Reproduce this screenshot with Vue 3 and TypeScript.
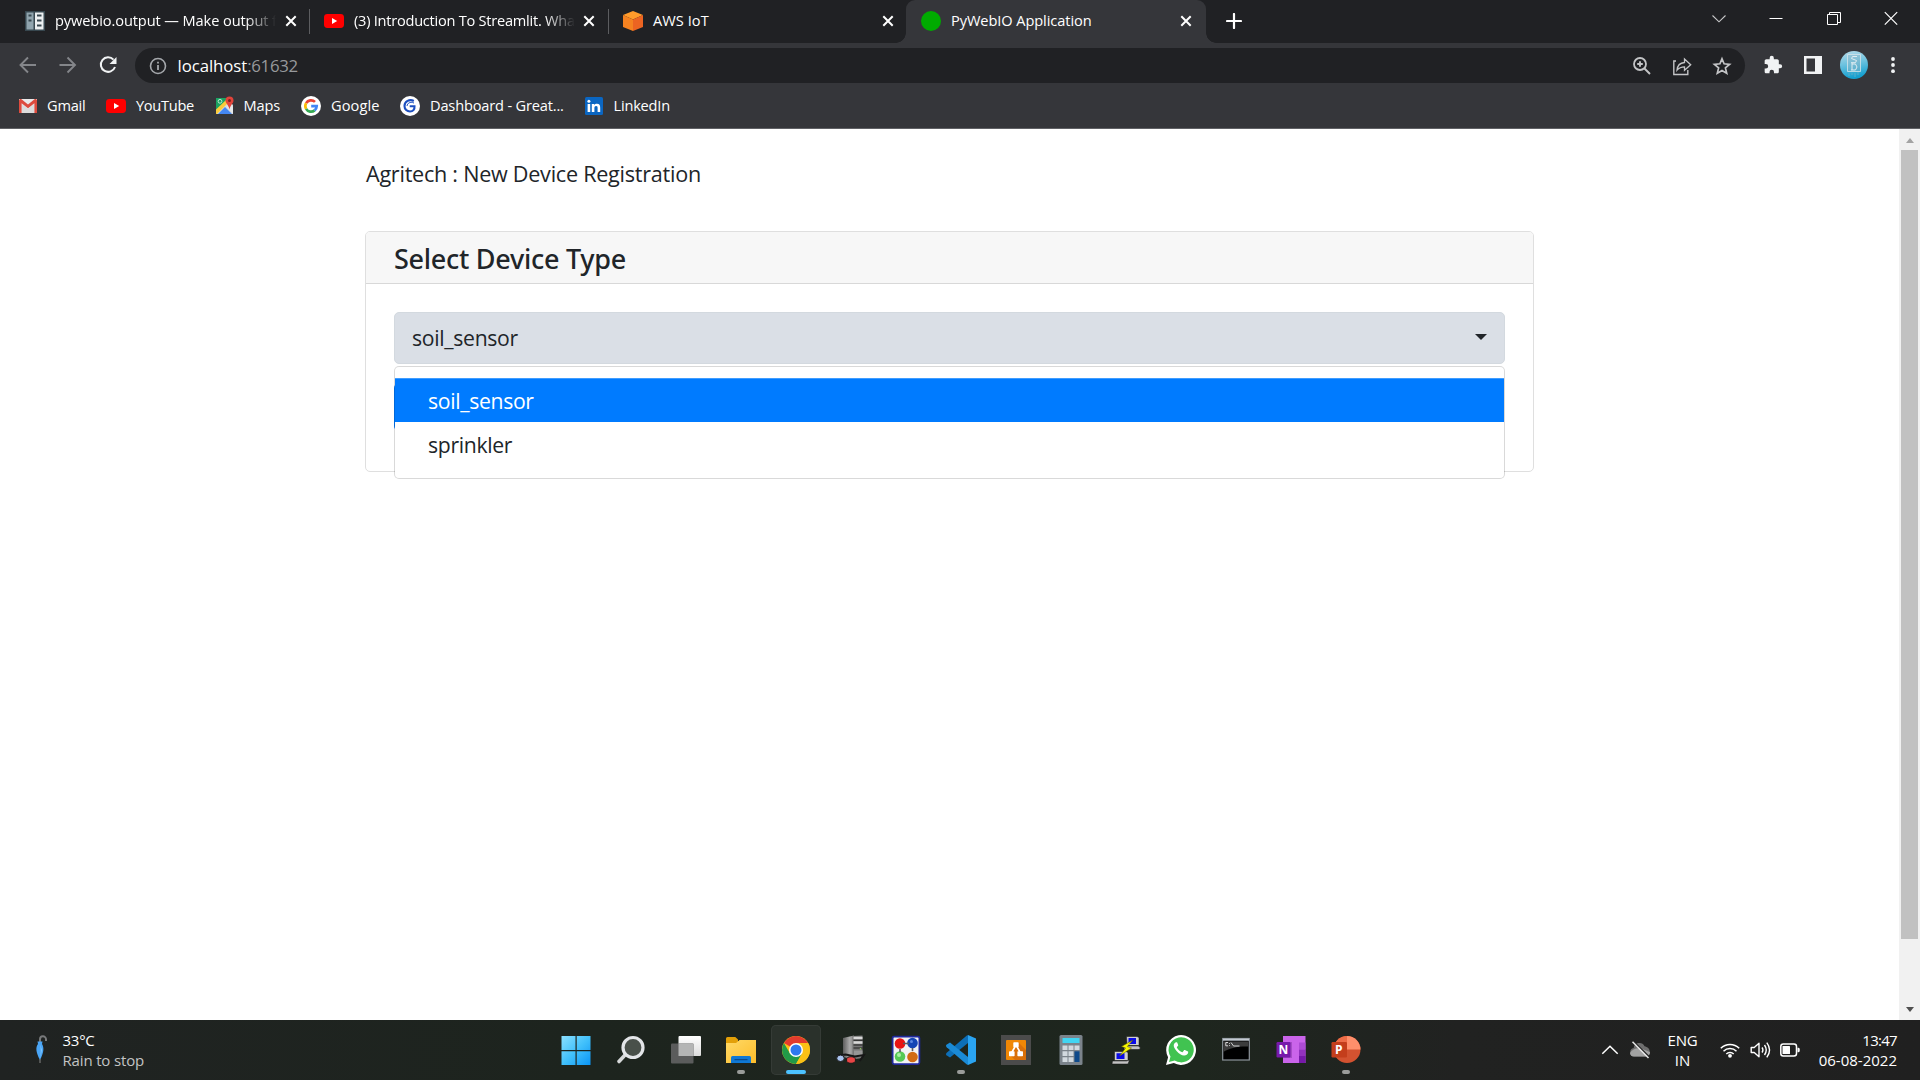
<script setup lang="ts">
import { ref } from 'vue'

interface Tab { id: string; title: string; active?: boolean }
interface Bookmark { id: string; label: string }

const tabs: Tab[] = [
  { id: 'docs', title: 'pywebio.output — Make output f' },
  { id: 'yt', title: '(3) Introduction To Streamlit. Wha' },
  { id: 'aws', title: 'AWS IoT' },
  { id: 'app', title: 'PyWebIO Application', active: true },
]

const bookmarks: Bookmark[] = [
  { id: 'gmail', label: 'Gmail' },
  { id: 'youtube', label: 'YouTube' },
  { id: 'maps', label: 'Maps' },
  { id: 'google', label: 'Google' },
  { id: 'dashboard', label: 'Dashboard - Great...' },
  { id: 'linkedin', label: 'LinkedIn' },
]

const options = ['soil_sensor', 'sprinkler']
const selected = ref('soil_sensor')
</script>

<template>
  <div class="screen">
    <header class="tabstrip">
      <div v-for="t in tabs" :key="t.id" class="tab" :class="['t-' + t.id, { active: t.active }]">
        <svg v-if="t.id === 'docs'" class="fav" viewBox="0 0 20 20">
          <rect width="20" height="20" fill="#37474f" />
          <rect x="1.5" y="1.5" width="7" height="17" fill="#90a4ae" />
          <rect x="10" y="1.5" width="8.5" height="17" fill="#eceff1" />
          <path d="M3.5 3.6h3v2h-3zM3.5 8.6h3v2h-3zM12 3.6h4.5v2H12zM12 8.6h4.5v2H12zM12 13.400h4.500v2H12z" fill="#37474f" />
        </svg>
        <svg v-else-if="t.id === 'yt'" class="fav" viewBox="0 0 20 20">
          <rect y="3" width="20" height="14" rx="3.4" fill="#f00" /><path d="M8 7v6l5.200-3z" fill="#fff" />
        </svg>
        <svg v-else-if="t.id === 'aws'" class="fav" viewBox="0 0 20 20">
          <path d="M10 0l10 4-10 4.500L0 4z" fill="#ff9b2b" /><path d="M0 4l10 4.500V20L0 16z" fill="#f58220" /><path d="M20 4l-10 4.500V20l10-4z" fill="#ec6422" />
        </svg>
        <svg v-else class="fav" viewBox="0 0 20 20"><circle cx="10" cy="10" r="10" fill="#00ab00" /></svg>
        <span class="title">{{ t.title }}</span>
        <svg class="x" viewBox="0 0 12 12"><path d="M1.300 1.300l9.400 9.400M10.700 1.300l-9.400 9.400" stroke="#fff" stroke-width="2" /></svg>
      </div>
      <svg class="plus" viewBox="0 0 16 16"><path d="M8 1v14M1 8h14" stroke="#fff" stroke-width="2.200" stroke-linecap="round" /></svg>
      <div class="wincontrols">
        <svg viewBox="0 0 16 16"><path d="M1.500 5.500l6.500 6.300L14.500 5.500" fill="none" stroke="#c8c9ca" stroke-width="1.100" /></svg>
        <svg viewBox="0 0 16 16"><path d="M1.500 8.500h13" stroke="#fff" /></svg>
        <svg viewBox="0 0 16 16"><path d="M1.500 4.500h10v10h-10zM3.500 4.500v-2h11v10h-3" fill="none" stroke="#fff" /></svg>
        <svg viewBox="0 0 16 16"><path d="M1.800 2.200l12.400 12.400M14.200 2.200L1.800 14.600" stroke="#fff" stroke-width="1.200" /></svg>
      </div>
    </header>

    <div class="toolbar">
      <div class="nav">
        <svg viewBox="0 0 20 20"><path d="M18 10H3M10 2.500L2.500 10l7.500 7.500" fill="none" stroke="#84868a" stroke-width="1.900" /></svg>
        <svg viewBox="0 0 20 20"><path d="M1.500 10h15M9.500 2.500L17 10l-7.500 7.500" fill="none" stroke="#84868a" stroke-width="1.900" /></svg>
        <svg viewBox="0 0 20 20"><path d="M15.500 4.600A7.300 7.300 0 1 0 17 12" fill="none" stroke="#f1f3f4" stroke-width="2" /><path d="M18.500 2v7h-7z" fill="#f1f3f4" /></svg>
      </div>
      <div class="omnibox">
        <svg class="info" viewBox="0 0 18 18"><circle cx="9" cy="9" r="7.500" fill="none" stroke="#a4a7ab" stroke-width="1.600" /><path d="M9 8v5M9 4.800v1.800" stroke="#a4a7ab" stroke-width="1.800" /></svg>
        <span class="url"><span class="host">localhost</span><span class="port">:61632</span></span>
        <div class="actions">
          <svg viewBox="0 0 20 20"><circle cx="8" cy="8" r="6" fill="none" stroke="#c3c4c6" stroke-width="1.800" /><path d="M8 5.200v5.600M5.200 8h5.600M12.500 12.500l5.500 5.500" stroke="#c3c4c6" stroke-width="1.900" /></svg>
          <svg viewBox="0 0 20 20"><path d="M4 5H1.800v13.500h14V14" fill="none" stroke="#c3c4c6" stroke-width="1.400" /><path d="M5 14.200c.4-4.700 2.500-7.300 7.500-7.700V3l6.200 5.700-6.200 5.600v-3.500c-3.200 0-5.500 1-7.500 3.400z" fill="none" stroke="#c3c4c6" stroke-width="1.300" /></svg>
          <svg viewBox="0 0 20 20"><path d="M10 2.800l2.100 5 5.500.5-4.200 3.600 1.300 5.300-4.700-2.800-4.700 2.800 1.300-5.300-4.200-3.600 5.500-.5z" fill="none" stroke="#c3c4c6" stroke-width="1.700" /></svg>
        </div>
      </div>
      <div class="tools">
        <svg class="ic" viewBox="0 0 24 24"><path fill="#f1f3f4" d="M20.500 11H19V7c0-1.100-.9-2-2-2h-4V3.500a2.500 2.500 0 0 0-5 0V5H4c-1.100 0-2 .9-2 2v3.800h1.500a2.700 2.700 0 0 1 0 5.400H2V20c0 1.100.9 2 2 2h3.800v-1.500a2.700 2.700 0 0 1 5.400 0V22H17c1.100 0 2-.9 2-2v-4h1.500a2.500 2.500 0 0 0 0-5z" /></svg>
        <svg class="ic" viewBox="0 0 20 20"><path fill="#f1f3f4" fill-rule="evenodd" d="M1 1h18v18H1zM3.500 3.500h8.500v13H3.500z" /></svg>
        <svg class="avatar" viewBox="0 0 28 28">
          <defs><linearGradient id="av" x1="0" y1="0" x2="0.200" y2="1"><stop offset="0" stop-color="#b9dbe8" /><stop offset=".5" stop-color="#6cc2df" /><stop offset="1" stop-color="#14a0d0" /></linearGradient></defs>
          <circle cx="14" cy="14" r="14" fill="url(#av)" />
          <path d="M7.500 3.500h13v17h-13z" fill="#8fb3c2" fill-opacity=".4" stroke="#d5e4ea" stroke-width=".8" />
          <path d="M17 5.500h-4.500l-1 2 5 2-1 2.200h-4.500M12 12v7M12 13h3.500l1.500 3-1.500 3H11" fill="none" stroke="#e0edf2" stroke-width="1" />
          <path d="M9 22v3M12 22v2M15 22v4M18 21v3" stroke="#5badc9" />
        </svg>
        <svg class="dots" viewBox="0 0 6 20"><circle cx="3" cy="4" r="1.900" fill="#f1f3f4" /><circle cx="3" cy="10" r="1.900" fill="#f1f3f4" /><circle cx="3" cy="16.200" r="1.900" fill="#f1f3f4" /></svg>
      </div>
    </div>

    <nav class="bookmarks">
      <div v-for="b in bookmarks" :key="b.id" class="bm" :class="'b-' + b.id">
        <svg v-if="b.id === 'gmail'" viewBox="0 0 20 20">
          <path d="M1 3h18v14H1z" fill="#e9e9e9" /><path d="M4 17V8l6 5 6-5v9z" fill="#dcdcdc" />
          <path d="M1 17V4.500C1 3 2.500 2.500 3.500 3.300L10 8.500l6.500-5.200C17.500 2.500 19 3 19 4.500V17h-2.600V7.200L10 12.200 3.600 7.200V17z" fill="#dd4b3e" />
        </svg>
        <svg v-else-if="b.id === 'youtube'" viewBox="0 0 20 20"><rect y="3" width="20" height="14" rx="3.400" fill="#f00" /><path d="M8 7v6l5.200-3z" fill="#fff" /></svg>
        <svg v-else-if="b.id === 'maps'" viewBox="0 0 20 20">
          <path d="M1 2h13v7L4 18H1z" fill="#1ba261" /><path d="M1 15L13 4l5 5v9H1z" fill="#d8dde0" /><path d="M1 13.500L11 4l3 2L2 18H1z" fill="#fbcb3b" /><path d="M3 18l7-7 7 7z" fill="#4487f3" /><path d="M14 7l4 4v6.500L12 11z" fill="#e6e8ea" />
          <circle cx="5" cy="5.300" r="1.900" fill="none" stroke="#bfe6d0" />
          <path d="M14.500.5a4 4 0 0 1 4 4c0 3-3 4-4 9-1-5-4-6-4-9a4 4 0 0 1 4-4z" fill="#e2443a" /><circle cx="14.500" cy="4.500" r="1.500" fill="#7b231e" />
        </svg>
        <svg v-else-if="b.id === 'google'" viewBox="0 0 20 20">
          <circle cx="10" cy="10" r="10" fill="#fff" />
          <g fill="none" stroke-width="2.700"><path d="M5.100 7.200A5.700 5.700 0 0 1 14 5.900" stroke="#ea4335" /><path d="M5.100 12.800a5.700 5.700 0 0 1 0-5.600" stroke="#fbbc05" /><path d="M13.600 14.400a5.700 5.700 0 0 1-8.500-1.600" stroke="#34a853" /><path d="M10.200 10.200h5.500a5.700 5.700 0 0 1-2.100 4.200" stroke="#4285f4" /></g>
        </svg>
        <svg v-else-if="b.id === 'dashboard'" viewBox="0 0 20 20">
          <circle cx="10" cy="10" r="10" fill="#fff" />
          <path d="M13.800 5C9.500 2.700 4.500 5.500 4.500 10c0 3.500 2.600 5.500 5.500 5.500 3 0 4.800-2 4.500-5.300H9.700" fill="none" stroke="#1c4fc0" stroke-width="2.100" /><path d="M14 7C10 5.500 7.500 7 7 10" fill="none" stroke="#1c4fc0" stroke-width="1" />
        </svg>
        <svg v-else viewBox="0 0 20 20">
          <rect x="1" y="1" width="18" height="18" rx="1.500" fill="#0a66c2" />
          <path d="M3.600 8h2.600v8H3.600zM7.800 8h2.500v1.200c.5-.9 1.400-1.400 2.700-1.400 2.500 0 3.200 1.500 3.200 4V16h-2.600v-3.800c0-1.200-.2-2.100-1.500-2.100-1.200 0-1.700.9-1.700 2.100V16H7.800z" fill="#fff" /><circle cx="4.900" cy="5.200" r="1.500" fill="#fff" />
        </svg>
        <span>{{ b.label }}</span>
      </div>
    </nav>

    <div class="viewport">
      <main class="page">
        <p class="heading">Agritech : New Device Registration</p>
        <section class="card">
          <h5 class="card-header">Select Device Type</h5>
          <div class="card-body">
            <div class="picker">
              <button class="toggle" type="button"><span>{{ selected }}</span><i class="caret"></i></button>
              <ul class="menu">
                <li v-for="o in options" :key="o" :class="{ on: o === selected }">{{ o }}</li>
              </ul>
            </div>
            <div class="submit"></div>
          </div>
        </section>
      </main>
      <aside class="scrollbar">
        <i class="up"></i>
        <div class="thumb"></div>
        <i class="down"></i>
      </aside>
    </div>

    <footer class="taskbar">
      <div class="weather">
        <svg viewBox="0 0 14 30">
          <path d="M5 7V4.500a3 3 0 0 1 6-.3V6" fill="none" stroke="#77797a" stroke-width="2" />
          <path d="M2.500 6.500h5l-.5 2.500c2 3 2.300 8-2 16C.7 17 .5 12 3 9z" fill="#4aa5f5" /><path d="M5 9c1 4 1 9 0 15l2-9z" fill="#86caff" /><path d="M5 24v4" stroke="#777" stroke-width="1.200" />
        </svg>
        <div class="lines"><span class="temp">33°C</span><span class="cond">Rain to stop</span></div>
      </div>

      <div class="apps">
        <div class="app">
          <svg viewBox="0 0 30 30"><defs><linearGradient id="win" x1="0" y1="0" x2="1" y2="1"><stop offset="0" stop-color="#8be0ff" /><stop offset=".5" stop-color="#42c1fb" /><stop offset="1" stop-color="#0a94f5" /></linearGradient></defs><path d="M.5 1H14.500v14H.5zM15.700 1H29.500v14H15.700zM.5 16.200H14.500V30H.5zM15.700 16.200H29.500V30H15.700z" fill="url(#win)" /></svg>
        </div>
        <div class="app">
          <svg viewBox="0 0 30 30"><path d="M9.500 19.500L3 26.500" stroke="#d6d8d9" stroke-width="3.600" stroke-linecap="round" /><circle cx="17" cy="12.500" r="10" fill="#49504a" stroke="#e3e5e8" stroke-width="3.200" /></svg>
        </div>
        <div class="app">
          <svg viewBox="0 0 30 30"><defs><linearGradient id="tv" x1="0" y1="0" x2="0" y2="1"><stop offset="0" stop-color="#fff" /><stop offset="1" stop-color="#dcdcdc" /></linearGradient></defs><rect x="7.500" y="1" width="22.500" height="20" rx="1" fill="url(#tv)" /><rect y="8.500" width="22.500" height="20" rx="1" fill="#5b5c5c" /><path d="M7.500 8.500h15V21h-15z" fill="#b4b5b5" /></svg>
        </div>
        <div class="app run">
          <svg viewBox="0 0 30 30"><defs><linearGradient id="fo" x1="0" y1="0" x2="1" y2="1"><stop offset="0" stop-color="#ffd967" /><stop offset="1" stop-color="#fdbd2a" /></linearGradient></defs><path d="M0 3.500Q0 2 1.500 2h7.800L12 4.500V9H0z" fill="#e3a008" /><path d="M0 8h10l3.500-3H30v23H0z" fill="url(#fo)" /><path d="M5 28v-5.500Q5 21 6.500 21h17Q25 21 25 22.500V28z" fill="#0f78d4" /><path d="M9 24.700h12" stroke="#0a4a8c" stroke-width="1.300" stroke-linecap="round" /></svg>
        </div>
        <div class="app focused">
          <svg viewBox="0 0 30 30">
            <circle cx="15" cy="15" r="14" fill="#fbc116" />
            <path d="M15 15L2.900 8A14 14 0 0 1 27.100 8z" fill="#e33b2e" />
            <path d="M2.900 8A14 14 0 0 0 15 29l6-10.500L9 18.500z" fill="#229a48" /><path d="M21.100 18.500L15 29A14 14 0 0 0 27.100 8H15z" fill="#fbc116" />
            <circle cx="15" cy="15" r="7" fill="#fff" /><circle cx="15" cy="15" r="5.500" fill="#2f79ee" />
          </svg>
        </div>
        <div class="app">
          <svg viewBox="0 0 30 30">
            <defs><linearGradient id="sv" x1="0" y1="0" x2="1" y2="0"><stop offset="0" stop-color="#5d5d5d" /><stop offset=".6" stop-color="#a8a8a8" /><stop offset="1" stop-color="#888" /></linearGradient></defs>
            <path d="M7 3l11-2.500v24L7 22z" fill="url(#sv)" /><path d="M16.500 1l10-.5V23l-10 1.500z" fill="#777" /><path d="M17.500 3h9M17.500 7.500h9" stroke="#d8d8d8" stroke-width="2.600" /><path d="M17.500 5.300h9M17.500 10h9M17.500 13h9" stroke="#222" stroke-width="1.100" /><path d="M18 15.500h8.500v6H18z" fill="#969696" /><circle cx="24.500" cy="13.800" r=".8" fill="#8fd05a" />
            <path d="M.8 20.500l9-1 9 2 9-1.500-4 6" fill="none" stroke="#161616" stroke-width="2" /><ellipse cx="4.500" cy="23.300" rx="3.800" ry="3.200" fill="#a9c3ee" stroke="#1a1a1a" /><ellipse cx="15" cy="25" rx="4.500" ry="3.300" fill="#e94545" stroke="#1a1a1a" />
          </svg>
        </div>
        <div class="app">
          <svg viewBox="0 0 30 30">
            <rect x="1.600" y="1.600" width="26.800" height="27.500" rx="1.500" fill="#f2f2f4" stroke="#20289b" stroke-width="1.800" />
            <circle cx="9" cy="8.500" r="5.300" fill="#e81313" /><circle cx="21.500" cy="8" r="5.300" fill="#1545b5" /><circle cx="9" cy="21.500" r="5.300" fill="#56c955" /><circle cx="21.500" cy="22" r="5.300" fill="#d26b13" />
            <circle cx="8" cy="20" r="2" fill="#a9efa3" /><circle cx="20.500" cy="6.500" r="1.500" fill="#5a86e0" /><path d="M12 8.500h6M9 14v3M21.500 13v3" stroke="#5a5a62" stroke-width="1.600" />
          </svg>
        </div>
        <div class="app run">
          <svg viewBox="0 0 30 30"><path d="M22 0v8L4 22.500 .4 20.200Q-.5 19 .7 17.800L20.500.7z" fill="#0d6fb8" /><path d="M22 30v-8L4 7.500.4 9.800Q-.5 11 .7 12.200L20.500 29.300z" fill="#1a8ad6" /><path d="M22 0L30 3.500v23L22 30z" fill="#2aa4f1" /></svg>
        </div>
        <div class="app">
          <svg viewBox="0 0 30 30"><rect width="30" height="30" fill="#4b4b4b" /><rect x="5" y="5" width="20" height="20" rx="1" fill="#f08705" /><path d="M17 7l8 8v10H14l-5-5z" fill="#d9700a" /><path d="M15 10l-4.500 8M15 10l4.500 8" stroke="#fff" stroke-width="1.600" /><rect x="12.300" y="7.300" width="5.400" height="5" rx=".7" fill="#fff" /><rect x="8" y="16.300" width="5.600" height="5" rx=".7" fill="#fff" /><rect x="16.400" y="16.300" width="5.600" height="5" rx=".7" fill="#fff" /></svg>
        </div>
        <div class="app">
          <svg viewBox="0 0 30 30"><rect x="3.500" width="23" height="30" rx="1.500" fill="#7b838b" /><rect x="6.500" y="3" width="17" height="5" fill="#41d5f2" /><path d="M6.500 10.500h5v4.500h-5zM12.500 10.500h5v4.500h-5zM18.500 10.500h5v4.500h-5zM6.500 16.300h5v4.700h-5zM12.500 16.300h5v4.700h-5zM6.500 22.300h5V27h-5zM12.500 22.300h5V27h-5z" fill="#d2d9df" /><path d="M18.500 16.300h5V27h-5z" fill="#0f4a8b" /></svg>
        </div>
        <div class="app">
          <svg viewBox="0 0 30 30"><g stroke="#111" stroke-width=".5"><path d="M15.500 1.500h10.500l2 1v8h-12z" fill="#cfcfcf" /><path d="M13.500 11h14l2 2-1.500 1.500H13z" fill="#c2c2c2" /><path d="M3.500 16.500H15l2 1v8H3.500z" fill="#cfcfcf" /><path d="M1.500 26h14l3-1-1.500 4H1z" fill="#c2c2c2" /></g><path d="M17.500 3h7.500v6h-7.500zM5.500 18.200h8V24h-8z" fill="#0a0ae8" /><path d="M22 5l-11.500 6.500 4.200 1.500L8.500 21 20.500 13l-4.200-1.500z" fill="#f8f800" stroke="#555500" stroke-width=".5" /></svg>
        </div>
        <div class="app">
          <svg viewBox="0 0 30 30"><path d="M0 30l2.100-7.700A14.900 14.900 0 1 1 7.800 28z" fill="#fff" /><path d="M3 27l1.500-5.500A12.600 12.600 0 1 1 8.700 25.600z" fill="#41c351" /><path transform="translate(1.300 1) scale(.92)" d="M11 7.500c-.4-.8-.8-.8-1.200-.8-1.300 0-2.800 1.500-2.800 3.600 0 2 1.500 4.200 3.300 6.200 2.400 2.700 5.300 4.400 7.800 4.700 2 .2 4-1 4.400-2.400.3-1 .3-1.700 0-1.900l-3.400-1.600c-.5-.2-.8-.1-1.100.4l-1.300 1.600c-.3.300-.6.400-1.100.1-2.200-1-4-2.600-5.100-4.600-.3-.5 0-.8.200-1l1-1.300c.2-.4.2-.6 0-1z" fill="#fff" /></svg>
        </div>
        <div class="app">
          <svg viewBox="0 0 30 30"><rect x="1.700" y="3.500" width="26.600" height="21.500" fill="#000" stroke="#8d949b" stroke-width="1.200" /><path d="M2 3.700h26v2H2z" fill="#c3cad2" /><path d="M2.300 6.500h25v5C18 11 8 13 2.300 17z" fill="#3c3c3c" /><path d="M7 7.500H4.800v3.300H7M8.500 8v.8M8.500 10v.8M10 7.500l2.500 3.500h6" fill="none" stroke="#d5d5d5" stroke-width="1" /></svg>
        </div>
        <div class="app">
          <svg viewBox="0 0 30 30"><path d="M7 1h22.500v27H7z" fill="#ca64ea" /><path d="M23 7.500h6.500v7H23z" fill="#ae4bd5" /><path d="M23 14.500h6.500V21H23z" fill="#9332bf" /><path d="M23 21h6.500v7H23z" fill="#7719aa" /><path d="M7 7h9v16H7z" fill="#a64cc6" /><rect x=".5" y="7" width="14" height="15.500" rx="1.200" fill="#7719aa" /><text x="7.500" y="19" text-anchor="middle" class="glyph">N</text></svg>
        </div>
        <div class="app run">
          <svg viewBox="0 0 30 30"><circle cx="16" cy="14.500" r="13.500" fill="#d35230" /><path d="M16 1a13.500 13.500 0 0 1 13.500 13.500H16z" fill="#ff8f6b" /><path d="M16 1v13.500H2.500A13.500 13.500 0 0 1 16 1z" fill="#ed6c47" /><rect x=".5" y="7" width="15.500" height="15.500" rx="1.200" fill="#c43e1c" /><text x="7.800" y="19" text-anchor="middle" class="glyph">P</text></svg>
        </div>
      </div>

      <div class="tray">
        <svg class="chev" viewBox="0 0 18 12"><path d="M1.300 9.800L9 2.200l7.700 7.600" fill="none" stroke="#fff" stroke-width="1.500" /></svg>
        <svg class="cloud" viewBox="0 0 22 18"><path d="M5 15.500a4.300 4.300 0 0 1-.3-8.500A5.700 5.700 0 0 1 15.500 5.200a5 5 0 0 1 2 .8 5 5 0 0 1-.5 9.500z" fill="#6e6e6e" /><path d="M1 12c2-4 7-5.500 11-4.500l9 3.500a4 4 0 0 1-3.500 4.500H5a4 4 0 0 1-4-3.500z" fill="#a2a2a2" /><path d="M4.800.8L20.500 16" stroke="#212121" stroke-width="1.500" /><path d="M3.500.8L19.500 17" stroke="#e8e8e8" stroke-width="1.500" /></svg>
        <div class="lang"><span>ENG</span><span class="in">IN</span></div>
        <svg class="wifi" viewBox="0 0 20 16"><g fill="none" stroke="#fff" stroke-width="1.500"><path d="M.8 6.300a13 13 0 0 1 18.400 0" /><path d="M3.500 9.200a9.200 9.200 0 0 1 13 0" /><path d="M6.300 12a5.200 5.200 0 0 1 7.400 0" /></g><circle cx="10" cy="13.800" r="1.900" fill="#fff" /></svg>
        <svg class="vol" viewBox="0 0 21 18"><path d="M1.200 6.500h3L9 2.300v13.400l-4.800-4.200h-3z" fill="none" stroke="#fff" stroke-width="1.400" stroke-linejoin="round" /><path d="M12 6.500q1.800 2.500 0 5M14.500 4q3.500 5 0 10M16.800 1.600q5.500 7.400 0 14.800" fill="none" stroke="#fff" stroke-width="1.400" /></svg>
        <svg class="bat" viewBox="0 0 20 14"><rect x=".8" y="1" width="15.700" height="12" rx="2.500" fill="none" stroke="#fff" stroke-width="1.500" /><rect x="2.500" y="3" width="7.500" height="8" rx=".6" fill="#fff" /><path d="M17.500 4.700h1q1.300 0 1.300 2.300t-1.300 2.300h-1z" fill="#fff" /></svg>
        <div class="clock"><span class="time">13:47</span><span class="date">06-08-2022</span></div>
      </div>
    </footer>
  </div>
</template>

<style>
body { margin: 0; overflow: hidden; background: #fff; }
</style>

<style scoped>
* { box-sizing: border-box; }
.screen { width: 1920px; height: 1080px; display: flex; flex-direction: column; font-family: "Open Sans", "Noto Sans", sans-serif; color: #fff; overflow: hidden; }
svg { display: block; flex: none; }

.tabstrip { height: 43px; flex: none; background: #202124; display: flex; padding-left: 11px; font-size: 14.6px; }
.tab { width: 299px; height: 43px; display: flex; align-items: center; padding: 0 14px 1px 14px; }
.t-docs, .t-yt { background: linear-gradient(#5c5d60, #5c5d60) no-repeat 298px 9px / 1px 25px; }
.t-aws { width: 297px; padding-right: 12.500px; }
.tab.active { width: 300px; background: #35363a; border-radius: 9px 9px 0 0; padding: 0 14px 1px 15px; position: relative; }
.tab.active::before, .tab.active::after { content: ""; position: absolute; bottom: 0; width: 10px; height: 10px; }
.tab.active::before { left: -10px; background: radial-gradient(circle at 0 0, transparent 9.500px, #35363a 10px); }
.tab.active::after { right: -10px; background: radial-gradient(circle at 100% 0, transparent 9.500px, #35363a 10px); }
.fav { width: 20px; height: 20px; margin-right: 10px; }
.title { flex: 1; white-space: nowrap; line-height: 24px; margin-bottom: 2px; }
.t-docs .title, .t-yt .title { -webkit-mask-image: linear-gradient(90deg, #000 191px, transparent 221px); mask-image: linear-gradient(90deg, #000 191px, transparent 221px); }
.t-docs .title { letter-spacing: -0.095px; }
.t-yt .title { letter-spacing: -0.25px; }
.t-aws .title { letter-spacing: 0.05px; }
.t-app .title { letter-spacing: -0.08px; }
.x { width: 12px; height: 12px; margin-left: 8px; }
.plus { width: 16px; height: 16px; margin: 13px 0 0 20px; }
.wincontrols { margin-left: auto; display: flex; gap: 41.300px; padding: 10px 21px 0 0; height: 26px; }
.wincontrols svg { width: 16px; height: 16px; }

.toolbar { height: 44px; flex: none; background: #35363a; display: flex; align-items: center; }
.nav { display: flex; gap: 20px; padding-left: 17.500px; width: 135px; }
.nav svg { width: 20px; height: 20px; }
.omnibox { width: 1610px; height: 35px; border-radius: 18px; background: #202124; display: flex; align-items: center; padding: 0 13px 0 14px; margin-top: 1px; }
.info { width: 18px; height: 18px; margin-right: 10.500px; }
.url { font-size: 16.800px; line-height: 24px; margin-top: 0; }
.host { letter-spacing: -0.07px; }
.port { letter-spacing: -0.28px; color: #97999c; }
.actions { margin-left: auto; display: flex; gap: 20px; }
.actions svg { width: 20px; height: 20px; }
.tools { display: flex; align-items: center; flex: 1; padding-left: 17.500px; }
.ic { width: 20px; height: 20px; margin-right: 20px; }
.avatar { width: 28px; height: 28px; margin: 0 22px 0 -3px; }
.dots { width: 6px; height: 20px; }

.bookmarks { height: 42px; flex: none; background: #35363a; border-bottom: 1px solid #606165; display: flex; align-items: center; padding: 0 0 3px 18px; font-size: 14.600px; }
.bm { display: flex; align-items: center; gap: 10px; white-space: nowrap; height: 24px; }
.bm svg { width: 20px; height: 20px; }
.bm span { margin-bottom: 2px; }
.b-gmail { width: 88px; gap: 9px; letter-spacing: -0.22px; }
.b-youtube { width: 108.500px; letter-spacing: -0.29px; }
.b-maps { width: 86.500px; gap: 9px; letter-spacing: -0.17px; }
.b-google { width: 99px; letter-spacing: 0.09px; }
.b-dashboard { width: 184px; letter-spacing: -0.17px; }
.b-linkedin { gap: 9.500px; letter-spacing: -0.2px; }

.viewport { height: 891px; flex: none; display: flex; background: #fff; color: #212529; }
.page { flex: 1; padding: 28px 365px 0 365px; }
.heading { margin: 0 0 0 1px; font-size: 21.600px; line-height: 33px; letter-spacing: -0.257px; }
.card { width: 1169px; height: 241px; margin-top: 41px; border: 1px solid #dfdfdf; border-radius: 5px; }
.card-header { margin: 0; height: 52px; background: #f7f7f7; border-bottom: 1px solid #d8d8d8; border-radius: 4px 4px 0 0; padding-left: 28px; font: 500 27px/53px "Noto Sans", "Open Sans", sans-serif; letter-spacing: -0.27px; }
.card-body { padding: 28px; }
.picker { position: relative; }
.toggle { width: 1111px; height: 52px; border: 1px solid #d3d9df; border-radius: 5px; background: #dadfe6; display: flex; align-items: center; justify-content: space-between; padding: 0 17.500px 0 17px; font: 21.200px/30px "Open Sans", "Noto Sans", sans-serif; letter-spacing: -0.31px; color: #212529; }
.caret { border: 6.500px solid transparent; border-top: 6px solid #212529; border-bottom: 0; margin-top: -3px; }
.menu { position: absolute; left: 0; top: 54px; width: 1111px; height: 113px; margin: 0; padding: 11px 0 0; list-style: none; background: #fff; background-clip: padding-box; border: 1px solid rgba(0, 0, 0, 0.15); border-radius: 5px; font-size: 21.200px; }
.menu li { height: 44px; line-height: 45px; padding-left: 33px; letter-spacing: -0.33px; }
.menu li.on { background: #007bff; color: #fff; box-shadow: inset 0 1px #3f9cff; }
.submit { width: 110px; height: 48px; margin-top: 19px; border-radius: 5px; background: #007bff; }
.scrollbar { width: 21px; background: #f1f1f1; display: flex; flex-direction: column; align-items: center; }
.up { border: 4.500px solid transparent; border-bottom: 5px solid #a3a3a3; border-top: 0; margin-top: 9px; }
.thumb { width: 17px; height: 789px; margin-top: 7px; background: #c1c1c1; }
.down { border: 4.500px solid transparent; border-top: 5px solid #505050; border-bottom: 0; margin-top: 68px; }

.taskbar { height: 60px; flex: none; background: linear-gradient(90deg, #202322 0, #1d241e 30%, #1e261e 62%, #212221 76%, #202020 100%); display: flex; font-size: 15px; line-height: 20px; }
.weather { width: 548px; display: flex; padding: 10px 0 0 34.500px; }
.weather svg { width: 14px; height: 30px; margin: 5px 14px 0 0; }
.lines, .lang, .clock { display: flex; flex-direction: column; }
.temp { letter-spacing: -0.26px; }
.cond { color: #c3c4c4; letter-spacing: -0.16px; }
.apps { display: flex; width: 825px; padding-top: 5px; }
.app { width: 50px; height: 50px; margin: 0 2.500px; border-radius: 5px; padding-top: 10px; display: flex; flex-direction: column; align-items: center; }
.app svg { width: 30px; height: 30px; }
.run::after { content: ""; width: 8px; height: 4px; border-radius: 2px; background: #9a9c9a; margin-top: 5px; }
.focused { background: #2a312b; box-shadow: inset 0 0 0 1px #353b36; }
.focused::after { content: ""; width: 20px; height: 4px; border-radius: 2px; background: #4cc2ff; margin-top: 5px; }
.glyph { font: 700 12px "Open Sans", sans-serif; fill: #fff; }
.tray { flex: 1; display: flex; align-items: center; padding-left: 228px; }
.chev { width: 18px; height: 12px; margin-right: 10px; }
.cloud { width: 22px; height: 18px; margin-right: 16px; }
.lang { width: 31px; align-items: center; letter-spacing: -0.18px; }
.lang .in { letter-spacing: 0; }
.wifi { width: 20px; height: 16px; margin-left: 22px; margin-bottom: 1px; }
.vol { width: 21px; height: 18px; margin-left: 9.500px; }
.bat { width: 20px; height: 14px; margin-left: 9.500px; }
.clock { margin-left: auto; padding-right: 23px; align-items: flex-end; margin-top: -1px; }
.time { letter-spacing: -0.7px; }
</style>
